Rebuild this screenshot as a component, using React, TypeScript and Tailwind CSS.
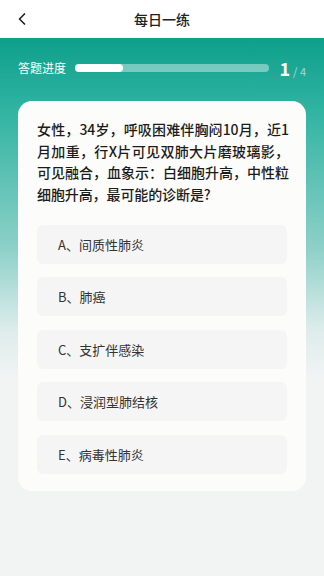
import { ChevronLeft } from "lucide-react";

const options = ["A、间质性肺炎", "B、肺癌", "C、支扩伴感染", "D、浸润型肺结核", "E、病毒性肺炎"];

export default function App() {
  return (
    <div
      className="flex min-h-[576px] w-full flex-col bg-[#f2f4f4] text-[#222]"
      style={{ fontFamily: '"Noto Sans CJK SC", "Noto Sans", sans-serif' }}
    >
      <header className="relative flex h-[38px] shrink-0 items-center justify-center bg-white">
        <ChevronLeft className="absolute left-[12px] size-[20px] text-[#222]" strokeWidth={2} />
        <h1 className="text-[14px] font-medium text-[#222]">每日一练</h1>
      </header>

      <main className="flex flex-1 flex-col bg-[linear-gradient(180deg,#0e9f8b_0px,#2fb3a1_70px,#8dd0c8_210px,#dcecea_290px,#f2f4f4_340px)] px-[18px] pb-[85px]">
        <div className="flex h-[60px] items-center">
          <span className="text-[12px] text-white">答题进度</span>
          <div className="ml-[9px] h-[8px] w-[194px] rounded-full bg-white/40">
            <div className="h-full w-[48px] rounded-full bg-white" />
          </div>
          <div className="ml-auto flex items-baseline text-white">
            <span className="text-[18px] font-semibold leading-none">1</span>
            <span className="ml-[3px] text-[11px] leading-none text-white/60">/ 4</span>
          </div>
        </div>

        <section className="mt-[3px] rounded-[14px] bg-[#fcfcfb] pb-[17px] pl-[19px] pr-[17px] pt-[18px]">
          <p className="text-justify text-[14px] font-medium leading-[21.7px] tracking-[-0.1px] text-[#1c1c1c]">
            女性，34岁，呼吸困难伴胸闷10月，近1月加重，行X片可见双肺大片磨玻璃影，可见融合，血象示：白细胞升高，中性粒细胞升高，最可能的诊断是?
          </p>
          <ul className="mr-[2px] mt-[19px] flex flex-col gap-[13.5px]">
            {options.map((option) => (
              <li
                className="flex h-[39px] items-center rounded-[6px] bg-[#f5f5f5] px-[21px] text-[13px] text-[#333]"
                key={option}
              >
                {option}
              </li>
            ))}
          </ul>
        </section>
      </main>
    </div>
  );
}
